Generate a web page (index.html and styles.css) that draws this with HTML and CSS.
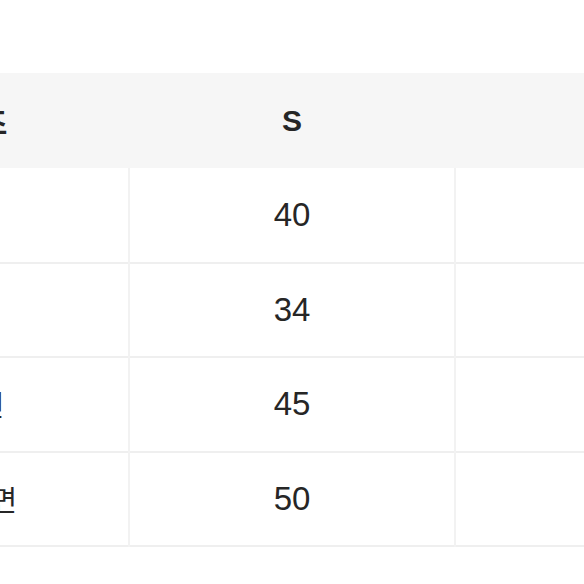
FILE: index.html
```html
<!DOCTYPE html>
<html lang="ko">
<head>
<meta charset="utf-8">
<link rel="stylesheet" href="styles.css">
</head>
<body>
<div class="wrap">
  <table class="size-table">
    <colgroup><col class="c"><col class="c"><col class="c"></colgroup>
    <thead>
      <tr><th class="label">사이즈</th><th class="head">S</th><th class="head">M</th></tr>
    </thead>
    <tbody>
      <tr><td class="label">총장</td><td class="val">40</td><td class="val">42</td></tr>
      <tr><td class="label">어깨</td><td class="val">34</td><td class="val">36</td></tr>
      <tr><td class="label">밑단면</td><td class="val">45</td><td class="val">47</td></tr>
      <tr><td class="label">가슴단면</td><td class="val">50</td><td class="val">52</td></tr>
    </tbody>
  </table>
</div>
</body>
</html>
```
FILE: styles.css
```css
html, body {
  margin: 0;
  padding: 0;
  background: #ffffff;
}
.wrap {
  width: 584px;
  height: 584px;
  overflow: hidden;
  padding-top: 73px;
  box-sizing: border-box;
}
.size-table {
  margin-left: -197px;
  width: 978px;
  table-layout: fixed;
  border-collapse: collapse;
  color: #262626;
}
.size-table .c {
  width: 326px;
}
.size-table thead tr {
  background: #f6f6f6;
  height: 95px;
}
.size-table tbody tr {
  height: 94.5px;
  border-bottom: 2px solid #efefef;
}
.size-table td + td {
  border-left: 2px solid #f2f2f2;
}
.size-table th,
.size-table td {
  padding: 0;
  text-align: center;
  vertical-align: middle;
}
.label {
  font-family: "Noto Sans CJK KR", "Liberation Sans", sans-serif;
  font-size: 28px;
  font-weight: 400;
}
th.label {
  font-size: 30px;
  font-weight: 700;
}
.head {
  font-family: "Liberation Sans", "Noto Sans CJK KR", sans-serif;
  font-size: 30px;
  font-weight: 700;
}
.val {
  font-family: "Liberation Sans", "Noto Sans CJK KR", sans-serif;
  font-size: 33px;
  font-weight: 400;
}
```
